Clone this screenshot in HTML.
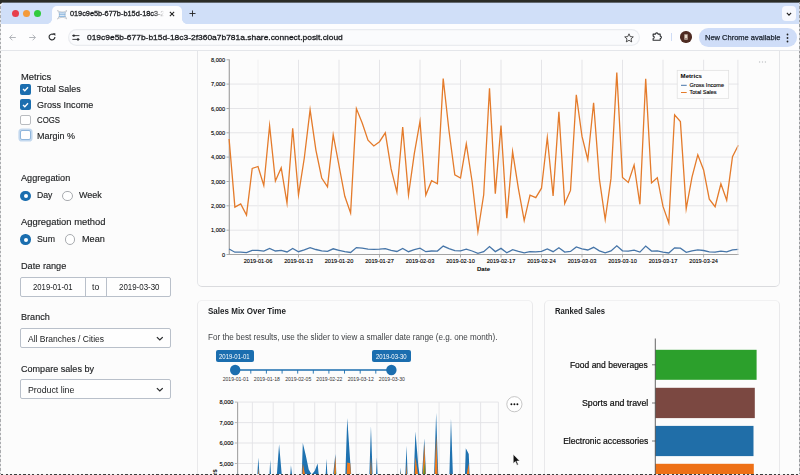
<!DOCTYPE html>
<html>
<head>
<meta charset="utf-8">
<title>019c9e5b-677b-b15d-18c3-</title>
<style>
html,body{margin:0;padding:0;}
body{width:800px;height:475px;overflow:hidden;background:#fcfcfc;position:relative;font-family:"Liberation Sans",sans-serif;color:#1d1f21;}
.abs{position:absolute;}
#win{position:absolute;left:1px;top:2px;width:797.6px;height:472px;background:#fcfcfc;border-radius:5px 3px 0 0;overflow:hidden;}
#tabstrip{position:absolute;left:0;top:0;width:798px;height:22px;background:#d0dff8;}
#tab{position:absolute;left:51.3px;top:3.8px;width:129.5px;height:18.2px;background:#fdfdfe;border-radius:5px 5px 0 0;}
#tab:before{content:"";position:absolute;left:-5px;bottom:0;width:5px;height:5px;background:radial-gradient(circle at 0 0,rgba(253,253,254,0) 4.6px,#fdfdfe 5.2px);}
#tab:after{content:"";position:absolute;right:-5px;bottom:0;width:5px;height:5px;background:radial-gradient(circle at 100% 0,rgba(253,253,254,0) 4.6px,#fdfdfe 5.2px);}
.tl{position:absolute;top:8px;width:7px;height:7px;border-radius:50%;}
#toolbar{position:absolute;left:0;top:22px;width:798px;height:26px;background:#fdfdfe;border-bottom:1px solid #e4e6ea;}
#omni{position:absolute;left:67px;top:5px;width:572px;height:17px;border-radius:9px;background:#fafbfd;box-shadow:inset 0 0 0 1.2px #eaecf0;}
.t7{font-size:7px;white-space:nowrap;}
#page{position:absolute;left:0;top:49px;width:798px;height:423px;background:#fcfcfc;overflow:hidden;}
.lbl{position:absolute;font-size:9.4px;line-height:12px;white-space:nowrap;color:#1c1e20;-webkit-text-stroke:0.15px #1c1e20;}
.card{position:absolute;border:1px solid #e5e6e9;border-radius:5px;background:#fcfcfc;box-sizing:border-box;}
.cb{position:absolute;left:20px;width:10.5px;height:10.5px;border-radius:2px;box-sizing:border-box;}
.cb.on{background:#1b6eaf;}
.cb.off{background:#fff;border:1px solid #b9bcc0;}
.rd{position:absolute;width:10.5px;height:10.5px;border-radius:50%;box-sizing:border-box;}
.rd.on{background:#1b6eaf;}
.rd.on:after{content:"";position:absolute;left:3.25px;top:3.25px;width:4px;height:4px;border-radius:50%;background:#fff;}
.rd.off{background:#fff;border:1px solid #a9acb0;}
.inp{position:absolute;border:1px solid #b9c0ca;border-radius:2px;background:#fefefe;box-sizing:border-box;}
.itx{font-size:8.4px;white-space:nowrap;color:#202224;line-height:10px;}
.fit{display:inline-block;transform-origin:0 50%;}
.fitr{display:inline-block;transform-origin:100% 50%;}
#l_metrics{transform:scaleX(0.9994);}
#l_total{transform:scaleX(0.9507);}
#l_gross{transform:scaleX(0.9630);}
#l_cogs{transform:scaleX(0.8331);}
#l_margin{transform:scaleX(0.9594);}
#l_agg{transform:scaleX(0.9731);}
#l_day{transform:scaleX(0.9237);}
#l_week{transform:scaleX(0.9581);}
#l_aggm{transform:scaleX(0.9996);}
#l_sum{transform:scaleX(0.9335);}
#l_mean{transform:scaleX(0.9722);}
#l_date{transform:scaleX(0.9765);}
#l_d1{transform:scaleX(0.9243);}
#l_to{transform:scaleX(1.0286);}
#l_d2{transform:scaleX(0.9453);}
#l_branch{transform:scaleX(0.9691);}
#l_allb{transform:scaleX(1.0155);}
#l_comp{transform:scaleX(0.9661);}
#l_prod{transform:scaleX(1.0490);}
#l_help{transform:scaleX(0.9760);}
#l_s1{transform:scaleX(0.8545);}
#l_s2{transform:scaleX(0.8545);}
#l_b1{transform:scaleX(1.0140);}
#l_b2{transform:scaleX(1.0472);}
#l_b3{transform:scaleX(1.0225);}
#l_url{transform:scaleX(1.0533);}
#l_smot{transform:scaleX(0.9336);}
#l_rank{transform:scaleX(0.8946);}
#l_newc{transform:scaleX(0.9881);}

svg text.ax{font-family:"Liberation Sans",sans-serif;font-size:5.6px;fill:#000;stroke:#000;stroke-width:0.12px;}
</style>
</head>
<body>
<div id="win">
  <div id="tabstrip">
    <div class="tl" style="left:10.5px;background:#e73f4c;"></div>
    <div class="tl" style="left:21.5px;background:#f49b3a;"></div>
    <div class="tl" style="left:33px;background:#30cb3d;"></div>
    <div id="tab">
      <svg class="abs" style="left:4.6px;top:4.6px" width="10.4" height="9.4" viewBox="0 0 10.4 9.4"><g fill="none" stroke-linecap="round"><path d="M0.6 0.8C3.2 2.6 3.2 6.8 0.6 8.6M9.8 0.8C7.2 2.6 7.2 6.8 9.8 8.6M0.8 0.6C3.4 2.6 7 2.6 9.6 0.6M0.8 8.8C3.4 6.8 7 6.8 9.6 8.8" stroke="#b9bec4" stroke-width="0.8"/><path d="M2.3 3H8.1M2.3 4.7H8.1M2.3 6.4H8.1" stroke="#79addb" stroke-width="0.9"/></g></svg>
      <div class="abs" style="left:17.6px;top:3.5px;width:95px;overflow:hidden;font-size:7.35px;white-space:nowrap;color:#1b1d21;-webkit-text-stroke:0.3px #1b1d21;-webkit-mask-image:linear-gradient(90deg,#000 88%,transparent 99%);">019c9e5b-677b-b15d-18c3-2f</div>
      <svg class="abs" style="left:117.2px;top:5.6px" width="6" height="6" viewBox="0 0 7 7"><path d="M1 1L6 6M6 1L1 6" stroke="#222" stroke-width="1.2" fill="none"/></svg>
    </div>
    <svg class="abs" style="left:188px;top:8px" width="7" height="7" viewBox="0 0 7 7"><path d="M3.5 0.5V6.5M0.5 3.5H6.5" stroke="#222" stroke-width="0.9" fill="none"/></svg>
    <div class="abs" style="left:780.5px;top:3.8px;width:14.5px;height:15.2px;border-radius:4px;background:#f7f9fe;"></div>
    <svg class="abs" style="left:784.8px;top:9.6px" width="6" height="4.5" viewBox="0 0 7 5"><path d="M1 1L3.5 3.5L6 1" stroke="#222" stroke-width="1.3" fill="none"/></svg>
  </div>
  <div id="toolbar">
    <svg class="abs" style="left:8px;top:9.6px" width="7" height="7" viewBox="0 0 7 7"><path d="M6.8 3.5H0.8M3.4 0.7L0.6 3.5L3.4 6.3" stroke="#a4a8ae" stroke-width="0.85" fill="none"/></svg>
    <svg class="abs" style="left:28px;top:9.6px" width="7" height="7" viewBox="0 0 7 7"><path d="M0.2 3.5H6.2M3.6 0.7L6.4 3.5L3.6 6.3" stroke="#a4a8ae" stroke-width="0.85" fill="none"/></svg>
    <svg class="abs" style="left:47.4px;top:9.2px" width="8" height="8" viewBox="0 0 8 8"><path d="M6.9 4A2.9 2.9 0 1 1 5.7 1.65" stroke="#2c2e31" stroke-width="1.15" fill="none"/><path d="M4.6 0.2H7.3V2.9z" fill="#2c2e31"/></svg>
    <div id="omni">
      <svg class="abs" style="left:4.4px;top:4.6px" width="8" height="7" viewBox="0 0 8 7"><path d="M0.4 1.6H7.4M0.4 5.4H7.4" stroke="#2c2e31" stroke-width="0.9"/><circle cx="1.8" cy="1.6" r="1.2" fill="#2c2e31"/><circle cx="6" cy="5.4" r="1.2" fill="#2c2e31"/></svg>
      <div id="l_url" class="abs fit" style="left:19.3px;top:3.9px;font-size:8px;white-space:nowrap;color:#1b1d21;-webkit-text-stroke:0.3px #1b1d21;">019c9e5b-677b-b15d-18c3-2f360a7b781a.share.connect.posit.cloud</div>
      <svg class="abs" style="left:555.5px;top:4px" width="10" height="10" viewBox="0 0 10 10"><path d="M5 0.8L6.25 3.6L9.3 3.9L7 5.9L7.7 8.9L5 7.3L2.3 8.9L3 5.9L0.7 3.9L3.75 3.6Z" stroke="#333" stroke-width="0.85" fill="none" stroke-linejoin="round"/></svg>
    </div>
    <svg class="abs" style="left:650.6px;top:7.3px" width="10" height="10" viewBox="0 0 10 10"><path d="M1.1 3.1H3.5A1.25 1.25 0 0 1 6 3.1H8.2V5.1A1.2 1.2 0 0 1 8.2 7.5V9.3H1.1V7.4A1.15 1.15 0 0 0 1.1 5.1Z" stroke="#2c2e31" stroke-width="1.05" fill="none" stroke-linejoin="round"/></svg>
    <div class="abs" style="left:669.7px;top:9px;width:1px;height:8.4px;background:#cfdcf5;"></div>
    <div class="abs" style="left:679.4px;top:7.2px;width:11.4px;height:11.4px;border-radius:50%;background:#4e2b22;"></div>
    <div class="abs" style="left:683.3px;top:10px;width:3.6px;height:5.6px;background:#a58f84;border-radius:1px;"></div><div class="abs" style="left:684.2px;top:11px;width:1.6px;height:3px;background:#e7d9c8;"></div>
    <div class="abs" style="left:697.6px;top:4.2px;width:98.4px;height:18.4px;border-radius:9.2px;background:#cfddf8;"></div>
    <div id="l_newc" class="abs fit" style="left:704px;top:9.2px;font-size:7.6px;color:#1a222e;-webkit-text-stroke:0.25px #1a222e;white-space:nowrap;">New Chrome available</div>
    <svg class="abs" style="left:785px;top:8.5px" width="3" height="10" viewBox="0 0 3 10"><circle cx="1.5" cy="1.5" r="0.9" fill="#222"/><circle cx="1.5" cy="5" r="0.9" fill="#222"/><circle cx="1.5" cy="8.5" r="0.9" fill="#222"/></svg>
  </div>
</div>

<!-- PAGE CONTENT: absolute in body coordinates -->
<div id="content" class="abs" style="left:0;top:0;width:800px;height:475px;">
  <!-- sidebar -->
  <div id="l_metrics" class="lbl fit" style="left:20.6px;top:71.1px;">Metrics</div>
  <div class="cb on" style="top:84px;"><svg class="abs" style="left:1.8px;top:2.2px" width="7" height="6" viewBox="0 0 7 6"><path d="M1 3L2.8 4.8L6 1.2" stroke="#fff" stroke-width="1.3" fill="none"/></svg></div>
  <div id="l_total" class="lbl fit" style="left:36.8px;top:83.3px;">Total Sales</div>
  <div class="cb on" style="top:99.4px;"><svg class="abs" style="left:1.8px;top:2.2px" width="7" height="6" viewBox="0 0 7 6"><path d="M1 3L2.8 4.8L6 1.2" stroke="#fff" stroke-width="1.3" fill="none"/></svg></div>
  <div id="l_gross" class="lbl fit" style="left:36.8px;top:98.7px;">Gross Income</div>
  <div class="cb off" style="top:114.8px;"></div>
  <div id="l_cogs" class="lbl fit" style="left:36.8px;top:114.1px;">COGS</div>
  <div class="cb off" style="top:129.6px;box-shadow:0 0 0 1.6px #c3d8ee;border-color:#8fb6dc;"></div>
  <div id="l_margin" class="lbl fit" style="left:36.8px;top:129.9px;">Margin %</div>

  <div id="l_agg" class="lbl fit" style="left:20.6px;top:171.6px;">Aggregation</div>
  <div class="rd on" style="left:20.4px;top:190.5px;"></div>
  <div id="l_day" class="lbl fit" style="left:37.4px;top:189.4px;">Day</div>
  <div class="rd off" style="left:62px;top:190.5px;"></div>
  <div id="l_week" class="lbl fit" style="left:79px;top:189.4px;">Week</div>

  <div id="l_aggm" class="lbl fit" style="left:20.6px;top:215.6px;">Aggregation method</div>
  <div class="rd on" style="left:20.4px;top:234.3px;"></div>
  <div id="l_sum" class="lbl fit" style="left:37.4px;top:233.2px;">Sum</div>
  <div class="rd off" style="left:64.8px;top:234.3px;"></div>
  <div id="l_mean" class="lbl fit" style="left:81.8px;top:233.2px;">Mean</div>

  <div id="l_date" class="lbl fit" style="left:20.6px;top:259.8px;">Date range</div>
  <div class="inp" style="left:20.3px;top:276.5px;width:150.5px;height:20.2px;"></div>
  <div class="abs" style="left:85.2px;top:277px;width:1px;height:19px;background:#b9c0ca;"></div>
  <div class="abs" style="left:106px;top:277px;width:1px;height:19px;background:#b9c0ca;"></div>
  <div id="l_d1" class="abs fit itx" style="left:32.9px;top:282.3px;">2019-01-01</div>
  <div id="l_to" class="abs fit itx" style="left:92.3px;top:282.3px;">to</div>
  <div id="l_d2" class="abs fit itx" style="left:118.7px;top:282.3px;">2019-03-30</div>

  <div id="l_branch" class="lbl fit" style="left:20.6px;top:311.3px;">Branch</div>
  <div class="inp" style="left:20.3px;top:328.2px;width:150.5px;height:20.2px;"></div>
  <div id="l_allb" class="abs fit itx" style="left:27.8px;top:333.6px;">All Branches / Cities</div>
  <svg class="abs" style="left:155.9px;top:335.6px" width="7.6" height="5.4" viewBox="0 0 7 5"><path d="M0.8 1L3.5 3.7L6.2 1" stroke="#2a2c2e" stroke-width="1.15" fill="none"/></svg>

  <div id="l_comp" class="lbl fit" style="left:20.6px;top:363px;">Compare sales by</div>
  <div class="inp" style="left:20.3px;top:379.2px;width:150.5px;height:20.2px;"></div>
  <div id="l_prod" class="abs fit itx" style="left:27.8px;top:384.8px;">Product line</div>
  <svg class="abs" style="left:155.9px;top:387px" width="7.6" height="5.4" viewBox="0 0 7 5"><path d="M0.8 1L3.5 3.7L6.2 1" stroke="#2a2c2e" stroke-width="1.15" fill="none"/></svg>

  <!-- card 1 -->
  <div class="card" style="left:197px;top:40px;width:583px;height:247px;clip-path:inset(11px 0 0 0);border-bottom-color:#dadbde;"></div>
  <svg class="abs" style="left:0;top:0" width="800" height="475" viewBox="0 0 800 475">
    <defs><clipPath id="cp1"><rect x="0" y="51" width="800" height="424"/></clipPath></defs>
    <g clip-path="url(#cp1)">
    <line x1="229.5" x2="738.5" y1="254.5" y2="254.5" stroke="#e2e2e5" stroke-width="0.9"/><line x1="226.5" x2="229.5" y1="254.5" y2="254.5" stroke="#a4a4a4" stroke-width="0.9"/><text x="225" y="256.6" text-anchor="end" class="ax">0</text><line x1="229.5" x2="738.5" y1="230.2" y2="230.2" stroke="#e2e2e5" stroke-width="0.9"/><line x1="226.5" x2="229.5" y1="230.2" y2="230.2" stroke="#a4a4a4" stroke-width="0.9"/><text x="225" y="232.3" text-anchor="end" class="ax">1,000</text><line x1="229.5" x2="738.5" y1="205.8" y2="205.8" stroke="#e2e2e5" stroke-width="0.9"/><line x1="226.5" x2="229.5" y1="205.8" y2="205.8" stroke="#a4a4a4" stroke-width="0.9"/><text x="225" y="207.9" text-anchor="end" class="ax">2,000</text><line x1="229.5" x2="738.5" y1="181.5" y2="181.5" stroke="#e2e2e5" stroke-width="0.9"/><line x1="226.5" x2="229.5" y1="181.5" y2="181.5" stroke="#a4a4a4" stroke-width="0.9"/><text x="225" y="183.6" text-anchor="end" class="ax">3,000</text><line x1="229.5" x2="738.5" y1="157.1" y2="157.1" stroke="#e2e2e5" stroke-width="0.9"/><line x1="226.5" x2="229.5" y1="157.1" y2="157.1" stroke="#a4a4a4" stroke-width="0.9"/><text x="225" y="159.2" text-anchor="end" class="ax">4,000</text><line x1="229.5" x2="738.5" y1="132.8" y2="132.8" stroke="#e2e2e5" stroke-width="0.9"/><line x1="226.5" x2="229.5" y1="132.8" y2="132.8" stroke="#a4a4a4" stroke-width="0.9"/><text x="225" y="134.9" text-anchor="end" class="ax">5,000</text><line x1="229.5" x2="738.5" y1="108.5" y2="108.5" stroke="#e2e2e5" stroke-width="0.9"/><line x1="226.5" x2="229.5" y1="108.5" y2="108.5" stroke="#a4a4a4" stroke-width="0.9"/><text x="225" y="110.6" text-anchor="end" class="ax">6,000</text><line x1="229.5" x2="738.5" y1="84.1" y2="84.1" stroke="#e2e2e5" stroke-width="0.9"/><line x1="226.5" x2="229.5" y1="84.1" y2="84.1" stroke="#a4a4a4" stroke-width="0.9"/><text x="225" y="86.2" text-anchor="end" class="ax">7,000</text><line x1="226.5" x2="229.5" y1="59.8" y2="59.8" stroke="#a4a4a4" stroke-width="0.9"/><text x="225" y="61.9" text-anchor="end" class="ax">8,000</text><line x1="258.0" x2="258.0" y1="59.8" y2="254.5" stroke="#efeff1" stroke-width="0.9"/><line x1="258.0" x2="258.0" y1="254.5" y2="257.5" stroke="#a4a4a4" stroke-width="0.9"/><text x="258.0" y="263" text-anchor="middle" class="ax">2019-01-06</text><line x1="298.5" x2="298.5" y1="59.8" y2="254.5" stroke="#e2e2e5" stroke-width="0.9"/><line x1="298.5" x2="298.5" y1="254.5" y2="257.5" stroke="#a4a4a4" stroke-width="0.9"/><text x="298.5" y="263" text-anchor="middle" class="ax">2019-01-13</text><line x1="339.0" x2="339.0" y1="59.8" y2="254.5" stroke="#e2e2e5" stroke-width="0.9"/><line x1="339.0" x2="339.0" y1="254.5" y2="257.5" stroke="#a4a4a4" stroke-width="0.9"/><text x="339.0" y="263" text-anchor="middle" class="ax">2019-01-20</text><line x1="379.5" x2="379.5" y1="59.8" y2="254.5" stroke="#e2e2e5" stroke-width="0.9"/><line x1="379.5" x2="379.5" y1="254.5" y2="257.5" stroke="#a4a4a4" stroke-width="0.9"/><text x="379.5" y="263" text-anchor="middle" class="ax">2019-01-27</text><line x1="420.0" x2="420.0" y1="59.8" y2="254.5" stroke="#e2e2e5" stroke-width="0.9"/><line x1="420.0" x2="420.0" y1="254.5" y2="257.5" stroke="#a4a4a4" stroke-width="0.9"/><text x="420.0" y="263" text-anchor="middle" class="ax">2019-02-03</text><line x1="460.5" x2="460.5" y1="59.8" y2="254.5" stroke="#e2e2e5" stroke-width="0.9"/><line x1="460.5" x2="460.5" y1="254.5" y2="257.5" stroke="#a4a4a4" stroke-width="0.9"/><text x="460.5" y="263" text-anchor="middle" class="ax">2019-02-10</text><line x1="501.0" x2="501.0" y1="59.8" y2="254.5" stroke="#e2e2e5" stroke-width="0.9"/><line x1="501.0" x2="501.0" y1="254.5" y2="257.5" stroke="#a4a4a4" stroke-width="0.9"/><text x="501.0" y="263" text-anchor="middle" class="ax">2019-02-17</text><line x1="541.5" x2="541.5" y1="59.8" y2="254.5" stroke="#e2e2e5" stroke-width="0.9"/><line x1="541.5" x2="541.5" y1="254.5" y2="257.5" stroke="#a4a4a4" stroke-width="0.9"/><text x="541.5" y="263" text-anchor="middle" class="ax">2019-02-24</text><line x1="582.0" x2="582.0" y1="59.8" y2="254.5" stroke="#e2e2e5" stroke-width="0.9"/><line x1="582.0" x2="582.0" y1="254.5" y2="257.5" stroke="#a4a4a4" stroke-width="0.9"/><text x="582.0" y="263" text-anchor="middle" class="ax">2019-03-03</text><line x1="622.5" x2="622.5" y1="59.8" y2="254.5" stroke="#e2e2e5" stroke-width="0.9"/><line x1="622.5" x2="622.5" y1="254.5" y2="257.5" stroke="#a4a4a4" stroke-width="0.9"/><text x="622.5" y="263" text-anchor="middle" class="ax">2019-03-10</text><line x1="663.0" x2="663.0" y1="59.8" y2="254.5" stroke="#e2e2e5" stroke-width="0.9"/><line x1="663.0" x2="663.0" y1="254.5" y2="257.5" stroke="#a4a4a4" stroke-width="0.9"/><text x="663.0" y="263" text-anchor="middle" class="ax">2019-03-17</text><line x1="703.6" x2="703.6" y1="59.8" y2="254.5" stroke="#e2e2e5" stroke-width="0.9"/><line x1="703.6" x2="703.6" y1="254.5" y2="257.5" stroke="#a4a4a4" stroke-width="0.9"/><text x="703.6" y="263" text-anchor="middle" class="ax">2019-03-24</text>
    <line x1="229.3" x2="229.3" y1="59.4" y2="254.5" stroke="#a4a4a4" stroke-width="1.2"/>
    <line x1="228.7" x2="738.5" y1="254.5" y2="254.5" stroke="#a4a4a4" stroke-width="1.2"/>
    <path d="M229.1,249.0 L234.9,252.2 L240.7,252.1 L246.5,252.6 L252.2,250.4 L258.0,250.3 L263.8,251.2 L269.6,248.4 L275.4,251.0 L281.2,250.4 L287.0,252.0 L292.7,248.5 L298.5,251.7 L304.3,249.9 L310.1,247.6 L315.9,249.5 L321.7,250.9 L327.5,251.3 L333.2,248.8 L339.0,250.3 L344.8,251.7 L350.6,252.5 L356.4,247.6 L362.2,248.2 L368.0,249.1 L373.8,249.3 L379.5,249.1 L385.3,248.7 L391.1,250.4 L396.9,251.5 L402.7,248.4 L408.5,251.7 L414.3,249.7 L420.0,248.2 L425.8,251.7 L431.6,251.0 L437.4,251.1 L443.2,246.1 L449.0,248.6 L454.8,250.7 L460.5,250.9 L466.3,249.2 L472.1,251.0 L477.9,253.4 L483.7,251.7 L489.5,246.6 L495.3,251.6 L501.0,248.4 L506.8,252.8 L512.6,249.6 L518.4,251.4 L524.2,252.9 L530.0,251.7 L535.8,251.8 L541.5,251.3 L547.3,248.9 L553.1,251.7 L558.9,247.7 L564.7,252.1 L570.5,251.4 L576.3,246.9 L582.0,248.9 L587.8,250.0 L593.6,247.3 L599.4,250.9 L605.2,252.8 L611.0,250.9 L616.8,245.8 L622.5,250.8 L628.3,251.1 L634.1,250.2 L639.9,252.1 L645.7,246.1 L651.5,251.1 L657.3,250.8 L663.0,252.2 L668.8,253.0 L674.6,247.8 L680.4,248.2 L686.2,252.3 L692.0,250.8 L697.8,249.8 L703.6,250.5 L709.3,251.9 L715.1,252.2 L720.9,251.1 L726.7,251.9 L732.5,249.8 L738.3,249.3" fill="none" stroke="#4675a8" stroke-width="1.3" stroke-linejoin="miter" stroke-miterlimit="10"/>
    <path d="M229.1,139.0 L234.9,207.1 L240.7,203.9 L246.5,215.0 L252.2,168.4 L258.0,166.5 L263.8,185.5 L269.6,125.7 L275.4,181.0 L281.2,167.8 L287.0,203.0 L292.7,128.3 L298.5,194.8 L304.3,158.0 L310.1,109.8 L315.9,150.1 L321.7,178.0 L327.5,186.8 L333.2,134.9 L339.0,165.5 L344.8,196.3 L350.6,213.0 L356.4,108.6 L362.2,123.0 L368.0,140.1 L373.8,146.0 L379.5,141.7 L385.3,132.8 L391.1,168.9 L396.9,192.2 L402.7,127.1 L408.5,195.0 L414.3,153.7 L420.0,121.4 L425.8,195.1 L431.6,180.7 L437.4,183.8 L443.2,78.6 L449.0,130.7 L454.8,174.9 L460.5,178.0 L466.3,143.9 L472.1,181.5 L477.9,231.8 L483.7,194.8 L489.5,88.2 L495.3,193.6 L501.0,125.5 L506.8,218.1 L512.6,151.6 L518.4,188.6 L524.2,220.6 L530.0,195.1 L535.8,197.6 L541.5,188.2 L547.3,137.5 L553.1,195.9 L558.9,111.9 L564.7,203.5 L570.5,190.4 L576.3,94.8 L582.0,136.4 L587.8,159.7 L593.6,102.8 L599.4,179.2 L605.2,219.5 L611.0,178.4 L616.8,72.6 L622.5,177.5 L628.3,182.4 L634.1,165.0 L639.9,204.3 L645.7,78.9 L651.5,182.9 L657.3,177.7 L663.0,206.4 L668.8,223.0 L674.6,114.8 L680.4,121.6 L686.2,208.8 L692.0,177.1 L697.8,154.8 L703.6,169.9 L709.3,199.2 L715.1,206.7 L720.9,183.8 L726.7,200.2 L732.5,156.6 L738.3,145.3" fill="none" stroke="#e47b2b" stroke-width="1.3" stroke-linejoin="miter" stroke-miterlimit="10"/>
    <text x="483.5" y="271" text-anchor="middle" style="font-family:'Liberation Sans',sans-serif;font-size:6.1px;font-weight:bold;fill:#000">Date</text>
    <line x1="737.9" x2="737.9" y1="59.8" y2="254.5" stroke="#e2e2e5" stroke-width="0.9"/>
    <rect x="677.2" y="70.3" width="51.5" height="28.2" fill="#fdfdfd" stroke="#dedede" stroke-width="0.7"/>
    <text x="680.6" y="77.9" style="font-family:'Liberation Sans',sans-serif;font-size:6.1px;font-weight:bold;fill:#000">Metrics</text>
    <line x1="681" x2="686.7" y1="85.3" y2="85.3" stroke="#4675a8" stroke-width="1"/>
    <text x="689.5" y="87" class="ax" style="font-size:5.55px">Gross Income</text>
    <line x1="681" x2="686.7" y1="92.5" y2="92.5" stroke="#e47b2b" stroke-width="1"/>
    <text x="689.5" y="94.2" class="ax" style="font-size:5.55px">Total Sales</text>
    <circle cx="759.6" cy="62" r="0.7" fill="#c2c4c7"/><circle cx="762.5" cy="62" r="0.7" fill="#c2c4c7"/><circle cx="765.4" cy="62" r="0.7" fill="#c2c4c7"/>
    </g>
  </svg>

  <!-- card 2 -->
  <div class="card" style="left:197px;top:299.5px;width:336px;height:200px;border-color:#f1f1f2 #e9e9eb #e9e9eb #e9e9eb;"></div>
  <div id="l_smot" class="abs fit" style="left:208px;top:305.8px;font-size:8.6px;line-height:11px;font-weight:bold;white-space:nowrap;color:#1d1f21;">Sales Mix Over Time</div>
  <div id="l_help" class="abs fit" style="left:208px;top:332.2px;font-size:8.3px;line-height:11px;white-space:nowrap;color:#404346;">For the best results, use the slider to view a smaller date range (e.g. one month).</div>
  <!-- slider -->
  <div class="abs" style="left:216px;top:350.4px;width:38.4px;height:11.2px;border-radius:2px;background:#1b6eaf;"></div>
  <div id="l_s1" class="abs fit" style="left:219.4px;top:351.6px;font-size:7px;line-height:9px;color:#fff;white-space:nowrap;">2019-01-01</div>
  <div class="abs" style="left:372.2px;top:350.4px;width:38.4px;height:11.2px;border-radius:2px;background:#1b6eaf;"></div>
  <div id="l_s2" class="abs fit" style="left:375.6px;top:351.6px;font-size:7px;line-height:9px;color:#fff;white-space:nowrap;">2019-03-30</div>
  <svg class="abs" style="left:0;top:0" width="800" height="475" viewBox="0 0 800 475">
    <g stroke="#1b6eaf" stroke-width="0.9"><line x1="235.2" x2="235.2" y1="370" y2="373.6"/><line x1="250.8" x2="250.8" y1="370" y2="373.6"/><line x1="266.4" x2="266.4" y1="370" y2="373.6"/><line x1="282.1" x2="282.1" y1="370" y2="373.6"/><line x1="297.7" x2="297.7" y1="370" y2="373.6"/><line x1="313.3" x2="313.3" y1="370" y2="373.6"/><line x1="328.9" x2="328.9" y1="370" y2="373.6"/><line x1="344.5" x2="344.5" y1="370" y2="373.6"/><line x1="360.2" x2="360.2" y1="370" y2="373.6"/><line x1="375.8" x2="375.8" y1="370" y2="373.6"/><line x1="391.4" x2="391.4" y1="370" y2="373.6"/></g>
    <line x1="235.2" x2="391.4" y1="370" y2="370" stroke="#1b6eaf" stroke-width="1.5"/>
    <circle cx="235.2" cy="370" r="5.2" fill="#1b6eaf"/>
    <circle cx="391.4" cy="370" r="5.2" fill="#1b6eaf"/>
    <g style="font-family:'Liberation Sans',sans-serif;font-size:5.1px;fill:#333" text-anchor="middle"><text x="235.7" y="380.5">2019-01-01</text><text x="266.9" y="380.5">2019-01-18</text><text x="298.2" y="380.5">2019-02-05</text><text x="329.4" y="380.5">2019-02-22</text><text x="360.7" y="380.5">2019-03-12</text><text x="391.9" y="380.5">2019-03-30</text></g>
    <!-- area chart -->
    <defs><clipPath id="cp2"><rect x="237.6" y="400" width="261" height="75"/></clipPath></defs><line x1="237.6" x2="498.4" y1="483.9" y2="483.9" stroke="#e2e2e5" stroke-width="0.9"/><line x1="234.8" x2="237.6" y1="483.9" y2="483.9" stroke="#888" stroke-width="0.6"/><text x="233.4" y="485.9" text-anchor="end" class="ax" style="font-size:5.6px">4,000</text><line x1="237.6" x2="498.4" y1="463.5" y2="463.5" stroke="#e2e2e5" stroke-width="0.9"/><line x1="234.8" x2="237.6" y1="463.5" y2="463.5" stroke="#888" stroke-width="0.6"/><text x="233.4" y="465.5" text-anchor="end" class="ax" style="font-size:5.6px">5,000</text><line x1="237.6" x2="498.4" y1="443.0" y2="443.0" stroke="#e2e2e5" stroke-width="0.9"/><line x1="234.8" x2="237.6" y1="443.0" y2="443.0" stroke="#888" stroke-width="0.6"/><text x="233.4" y="445.0" text-anchor="end" class="ax" style="font-size:5.6px">6,000</text><line x1="237.6" x2="498.4" y1="422.6" y2="422.6" stroke="#e2e2e5" stroke-width="0.9"/><line x1="234.8" x2="237.6" y1="422.6" y2="422.6" stroke="#888" stroke-width="0.6"/><text x="233.4" y="424.6" text-anchor="end" class="ax" style="font-size:5.6px">7,000</text><line x1="237.6" x2="498.4" y1="402.1" y2="402.1" stroke="#e2e2e5" stroke-width="0.9"/><line x1="234.8" x2="237.6" y1="402.1" y2="402.1" stroke="#888" stroke-width="0.6"/><text x="233.4" y="404.1" text-anchor="end" class="ax" style="font-size:5.6px">8,000</text><line x1="252.4" x2="252.4" y1="402.2" y2="475" stroke="#e2e2e5" stroke-width="0.9"/><line x1="273.2" x2="273.2" y1="402.2" y2="475" stroke="#e2e2e5" stroke-width="0.9"/><line x1="293.9" x2="293.9" y1="402.2" y2="475" stroke="#e2e2e5" stroke-width="0.9"/><line x1="314.7" x2="314.7" y1="402.2" y2="475" stroke="#e2e2e5" stroke-width="0.9"/><line x1="335.4" x2="335.4" y1="402.2" y2="475" stroke="#e2e2e5" stroke-width="0.9"/><line x1="356.1" x2="356.1" y1="402.2" y2="475" stroke="#e2e2e5" stroke-width="0.9"/><line x1="376.9" x2="376.9" y1="402.2" y2="475" stroke="#e2e2e5" stroke-width="0.9"/><line x1="397.6" x2="397.6" y1="402.2" y2="475" stroke="#e2e2e5" stroke-width="0.9"/><line x1="418.4" x2="418.4" y1="402.2" y2="475" stroke="#e2e2e5" stroke-width="0.9"/><line x1="439.1" x2="439.1" y1="402.2" y2="475" stroke="#e2e2e5" stroke-width="0.9"/><line x1="459.9" x2="459.9" y1="402.2" y2="475" stroke="#e2e2e5" stroke-width="0.9"/><line x1="480.6" x2="480.6" y1="402.2" y2="475" stroke="#e2e2e5" stroke-width="0.9"/><line x1="498.4" x2="498.4" y1="402.2" y2="475" stroke="#e2e2e5" stroke-width="0.9"/><line x1="237.6" x2="237.6" y1="402.2" y2="475" stroke="#a4a4a4" stroke-width="1.1"/><g clip-path="url(#cp2)"><polygon points="237.60,468.66 240.56,525.91 243.53,523.20 246.49,532.50 249.45,493.37 252.42,491.79 255.38,507.74 258.35,457.44 261.31,503.91 264.27,492.88 267.24,522.45 270.20,459.67 273.16,515.57 276.13,484.58 279.09,444.14 282.05,477.99 285.02,501.43 287.98,508.84 290.94,465.19 293.91,490.95 296.87,516.78 299.84,530.84 302.80,443.12 305.76,455.23 308.73,469.58 311.69,474.54 314.65,470.90 317.62,463.46 320.58,493.79 323.54,513.38 326.51,458.70 329.47,515.71 332.44,481.02 335.40,453.88 338.36,515.82 341.33,503.71 344.29,506.28 347.25,417.88 350.22,461.72 353.18,498.79 356.14,501.47 359.11,472.81 362.07,504.37 365.03,546.59 368.00,515.51 370.96,426.01 373.93,514.50 376.89,457.32 379.85,535.11 382.82,479.23 385.78,510.36 388.74,537.20 391.71,515.75 394.67,517.86 397.63,510.03 400.60,467.39 403.56,516.45 406.53,445.87 409.49,522.82 412.45,511.83 415.42,431.54 418.38,466.45 421.34,486.06 424.31,438.28 427.27,502.46 430.23,536.29 433.20,501.79 436.16,412.86 439.12,501.01 442.09,505.14 445.05,490.50 448.02,523.50 450.98,418.16 453.94,505.53 456.91,501.19 459.87,525.29 462.83,539.26 465.80,448.31 468.76,454.08 471.72,527.30 474.69,500.69 477.65,481.96 480.62,494.59 483.58,519.23 486.54,525.57 489.51,506.34 492.47,520.11 495.43,483.42 498.40,473.94 498.40,500 237.60,500" fill="#1f72b0" opacity="1"/><polygon points="237.60,476.84 240.56,538.18 243.53,535.47 246.49,544.77 249.45,505.64 252.42,504.06 255.38,520.01 258.35,467.67 261.31,516.18 264.27,505.15 267.24,534.72 270.20,478.08 273.16,527.84 276.13,496.85 279.09,478.90 282.05,490.26 285.02,513.70 287.98,521.11 290.94,479.51 293.91,503.22 296.87,529.05 299.84,543.11 302.80,463.57 305.76,477.72 308.73,481.85 311.69,480.68 314.65,479.08 317.62,479.82 320.58,506.06 323.54,525.65 326.51,479.15 329.47,527.98 332.44,493.29 335.40,455.93 338.36,528.09 341.33,515.98 344.29,518.55 347.25,462.46 350.22,463.35 353.18,511.06 356.14,513.74 359.11,475.27 362.07,516.64 365.03,558.86 368.00,527.78 370.96,456.69 373.93,526.77 376.89,477.77 379.85,547.38 382.82,491.50 385.78,522.63 388.74,549.47 391.71,528.02 394.67,530.13 397.63,522.30 400.60,470.46 403.56,528.72 406.53,463.26 409.49,535.09 412.45,524.10 415.42,457.10 418.38,476.68 421.34,498.33 424.31,443.39 427.27,514.73 430.23,548.56 433.20,514.06 436.16,435.35 439.12,513.28 442.09,517.41 445.05,502.77 448.02,535.77 450.98,471.33 453.94,517.80 456.91,513.46 459.87,537.56 462.83,551.53 465.80,478.98 468.76,463.28 471.72,539.57 474.69,512.96 477.65,494.23 480.62,506.86 483.58,531.50 486.54,537.84 489.51,518.61 492.47,532.38 495.43,495.69 498.40,480.07 498.40,500 237.60,500" fill="#ee7a1c" opacity="1"/><polygon points="237.60,489.11 240.56,550.45 243.53,547.74 246.49,557.04 249.45,517.91 252.42,516.33 255.38,532.28 258.35,473.80 261.31,528.45 264.27,517.42 267.24,546.99 270.20,490.35 273.16,540.11 276.13,509.12 279.09,491.17 282.05,502.53 285.02,525.97 287.98,533.38 290.94,491.78 293.91,515.49 296.87,541.32 299.84,555.38 302.80,488.11 305.76,489.99 308.73,494.12 311.69,492.95 314.65,491.35 317.62,492.09 320.58,518.33 323.54,537.92 326.51,491.42 329.47,540.25 332.44,505.56 335.40,470.24 338.36,540.36 341.33,528.25 344.29,530.82 347.25,523.81 350.22,481.76 353.18,523.33 356.14,526.01 359.11,481.40 362.07,528.91 365.03,565.70 368.00,540.05 370.96,471.00 373.93,539.04 376.89,490.04 379.85,559.65 382.82,503.77 385.78,534.90 388.74,561.74 391.71,540.29 394.67,542.40 397.63,534.57 400.60,476.59 403.56,540.99 406.53,473.48 409.49,547.36 412.45,536.37 415.42,477.55 418.38,488.95 421.34,510.60 424.31,461.80 427.27,527.00 430.23,560.83 433.20,526.33 436.16,486.48 439.12,525.55 442.09,529.68 445.05,515.04 448.02,548.04 450.98,477.47 453.94,530.07 456.91,525.73 459.87,549.83 462.83,563.80 465.80,491.25 468.76,481.69 471.72,551.84 474.69,525.23 477.65,506.50 480.62,519.13 483.58,543.77 486.54,550.11 489.51,530.88 492.47,544.65 495.43,507.96 498.40,492.34 498.40,500 237.60,500" fill="#2ca02c" opacity="1"/><polygon points="237.60,505.47 240.56,565.70 243.53,564.10 246.49,565.70 249.45,534.27 252.42,532.69 255.38,548.64 258.35,479.94 261.31,544.81 264.27,533.78 267.24,563.35 270.20,506.71 273.16,556.47 276.13,525.48 279.09,507.53 282.05,518.89 285.02,542.33 287.98,549.74 290.94,508.14 293.91,531.85 296.87,557.68 299.84,565.70 302.80,504.47 305.76,506.35 308.73,510.48 311.69,509.31 314.65,507.71 317.62,508.45 320.58,534.69 323.54,554.28 326.51,507.78 329.47,556.61 332.44,521.92 335.40,488.65 338.36,556.72 341.33,544.61 344.29,547.18 347.25,540.17 350.22,498.12 353.18,539.69 356.14,542.37 359.11,497.76 362.07,545.27 365.03,565.70 368.00,556.41 370.96,479.18 373.93,555.40 376.89,506.40 379.85,565.70 382.82,520.13 385.78,551.26 388.74,565.70 391.71,556.65 394.67,558.76 397.63,550.93 400.60,492.95 403.56,557.35 406.53,481.66 409.49,563.72 412.45,552.73 415.42,493.91 418.38,505.31 421.34,526.96 424.31,486.34 427.27,543.36 430.23,565.70 433.20,542.69 436.16,502.84 439.12,541.91 442.09,546.04 445.05,531.40 448.02,564.40 450.98,493.83 453.94,546.43 456.91,542.09 459.87,565.70 462.83,565.70 465.80,507.61 468.76,498.05 471.72,565.70 474.69,541.59 477.65,522.86 480.62,535.49 483.58,560.13 486.54,565.70 489.51,547.24 492.47,561.01 495.43,524.32 498.40,508.70 498.40,500 237.60,500" fill="#d62728" opacity="1"/></g><text transform="translate(217.3,486) rotate(-90)" style="font-family:'Liberation Sans',sans-serif;font-size:6.4px;font-weight:bold;fill:#111">Sales</text>
    <circle cx="514.4" cy="404.2" r="7.6" fill="#fff" stroke="#b8b8b8" stroke-width="0.8"/>
    <circle cx="511.4" cy="404.3" r="0.95" fill="#111"/><circle cx="514.4" cy="404.3" r="0.95" fill="#111"/><circle cx="517.4" cy="404.3" r="0.95" fill="#111"/>
    <!-- cursor -->
    <path d="M513.2 454.2L513.2 463.6L515.4 461.6L517 465.2L518.4 464.6L516.8 461.1L519.8 461.1Z" fill="#111" stroke="#fff" stroke-width="0.6"/>
  </svg>

  <!-- card 3 -->
  <div class="card" style="left:544px;top:299.5px;width:236px;height:200px;border-color:#f1f1f2 #e9e9eb #e9e9eb #e9e9eb;"></div>
  <div id="l_rank" class="abs fit" style="left:555px;top:305.8px;font-size:8.6px;line-height:11px;font-weight:bold;white-space:nowrap;color:#1d1f21;">Ranked Sales</div>
  <svg class="abs" style="left:0;top:0" width="800" height="475" viewBox="0 0 800 475">
    <rect x="655.5" y="349.8" width="101.1" height="30" fill="#2ca02c"/>
    <rect x="655.5" y="387.8" width="99.3" height="30.3" fill="#7b4841"/>
    <rect x="655.5" y="425.9" width="98" height="30.2" fill="#206ea8"/>
    <rect x="655.5" y="463.8" width="98.3" height="12" fill="#ee7016"/>
    <line x1="655.3" x2="655.3" y1="338.5" y2="475" stroke="#222" stroke-width="0.7"/>
    <g stroke="#222" stroke-width="0.6"><line x1="652" x2="655.3" y1="364.8" y2="364.8"/><line x1="652" x2="655.3" y1="403" y2="403"/><line x1="652" x2="655.3" y1="441" y2="441"/></g>
  </svg>
  <div id="l_b1" class="abs fitr" style="-webkit-text-stroke:0.2px #111;right:152.1px;top:359.6px;font-size:8.4px;line-height:11px;white-space:nowrap;color:#0c0c0c;">Food and beverages</div>
  <div id="l_b2" class="abs fitr" style="-webkit-text-stroke:0.2px #111;right:152.1px;top:397.8px;font-size:8.4px;line-height:11px;white-space:nowrap;color:#0c0c0c;">Sports and travel</div>
  <div id="l_b3" class="abs fitr" style="-webkit-text-stroke:0.2px #111;right:152.1px;top:436px;font-size:8.4px;line-height:11px;white-space:nowrap;color:#0c0c0c;">Electronic accessories</div>
</div>

<!-- edges -->
<div class="abs" style="left:0;top:0;width:800px;height:2px;background:#2a2c26;"></div>
<div class="abs" style="left:0;top:1.6px;width:800px;height:1px;background:linear-gradient(180deg,#2a2c26,#9ba7bb);"></div>
<div class="abs" style="left:0;top:2px;width:1px;height:473px;background:repeating-linear-gradient(180deg,#a9abae 0 2.4px,#e9e9ea 2.4px 4.44px);"></div>
<div class="abs" style="left:0;top:0;width:2px;height:4px;background:#2a2c26;border-radius:0 0 2px 0;"></div>
<div class="abs" style="left:799px;top:2px;width:1px;height:473px;background:repeating-linear-gradient(180deg,#9a9c9f 0 2.4px,#dcdcde 2.4px 4.44px);"></div>
<div class="abs" style="left:0;top:473.9px;width:800px;height:1.1px;background:repeating-linear-gradient(90deg,#ededed 0 1.1px,#3c3c3c 1.1px 3.4px,#ededed 3.4px 4.44px);"></div>
</body>
</html>
